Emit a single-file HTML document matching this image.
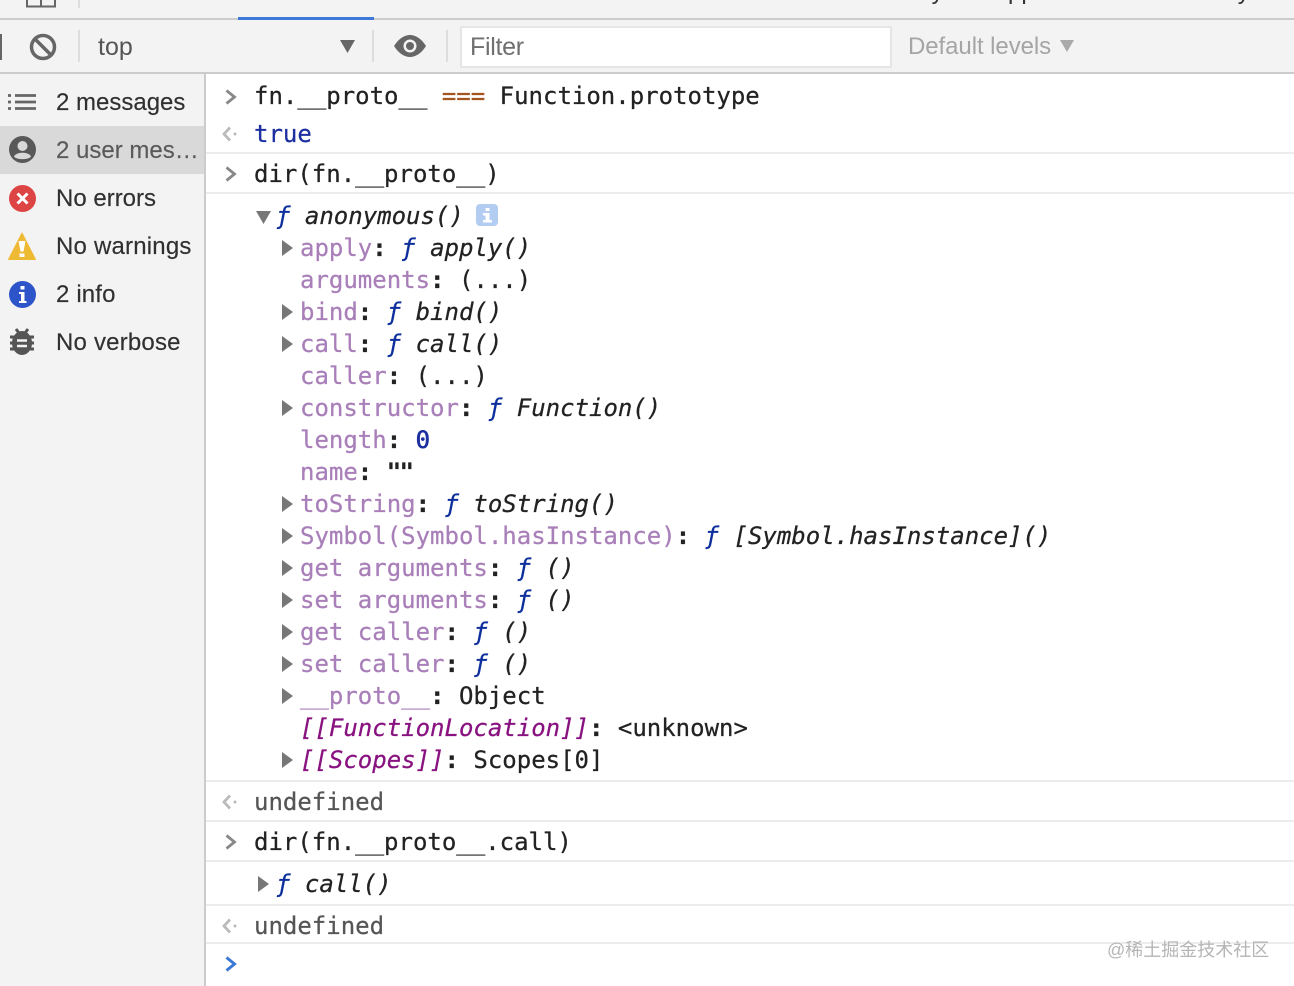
<!DOCTYPE html>
<html><head><meta charset="utf-8"><style>
html,body{margin:0;padding:0;background:#fff}
#p{position:relative;width:1294px;height:986px;overflow:hidden;background:#fff;font-family:"Liberation Sans","Noto Sans CJK SC",sans-serif}
#p div,#p svg{position:absolute}
.r{left:0;height:32px;font:24px/32px "DejaVu Sans Mono","Liberation Mono",monospace;white-space:pre;color:#222;-webkit-text-stroke:.25px currentColor}
.k{color:#a97fb9}.p{color:#881280}.f{color:#0d2f9c;font-style:italic}.i{font-style:italic}.b{color:#1c2fa0}.g{color:#555}
.l{height:2px;left:206px;width:1088px;background:#ececec}
.s{left:56px;font-size:24px;line-height:32px;color:#303030;white-space:nowrap;-webkit-text-stroke:.15px currentColor}
.t{top:-22px;font-size:24px;line-height:28px;color:#333;white-space:nowrap}
</style></head><body><div id="p">
<div style="left:0;top:0;width:1294px;height:72px;background:#f3f3f3"></div>
<div class="t" style="left:131px">Elements</div><div class="t" style="left:262px">Console</div><div class="t" style="left:400px">Sources</div><div class="t" style="left:530px">Network</div><div class="t" style="left:672px">Performance</div><div class="t" style="left:857px">Memory</div><div class="t" style="left:992px">Application</div><div class="t" style="left:1163px">Security</div>
<div style="left:0;top:18px;width:1294px;height:2px;background:#ccc"></div>
<div style="left:238px;top:17px;width:136px;height:3px;background:#3b78d8"></div>
<svg style="left:26px;top:-4px" width="30" height="12"><path d="M1 0V10.500H29V0M15 0V10" fill="none" stroke="#666" stroke-width="2"/></svg>
<div style="left:78px;top:0;width:2px;height:8px;background:#ddd"></div>
<div style="left:0;top:34px;width:2px;height:26px;background:#666"></div>
<svg style="left:29px;top:33px" width="28" height="28" viewBox="0 0 28 28"><circle cx="14" cy="14" r="11.500" fill="none" stroke="#666" stroke-width="3.500"/><path d="M6 6L22 22" stroke="#666" stroke-width="3.500"/></svg>
<div style="left:78px;top:30px;width:2px;height:32px;background:#ddd"></div>
<div style="left:98px;top:31px;font-size:25px;line-height:32px;color:#555">top</div>
<svg style="left:340px;top:40px" width="15" height="13"><path d="M0 0H15L7.500 13Z" fill="#666"/></svg>
<div style="left:372px;top:30px;width:2px;height:32px;background:#ddd"></div>
<svg style="left:394px;top:35px" width="32" height="22" viewBox="0 0 32 22"><path d="M0 11C5 3 11 0 16 0S27 3 32 11C27 19 21 22 16 22S5 19 0 11Z" fill="#666"/><circle cx="16" cy="11" r="6.500" fill="#f3f3f3"/><circle cx="16" cy="11" r="4" fill="#666"/></svg>
<div style="left:446px;top:30px;width:2px;height:32px;background:#ddd"></div>
<div style="left:460px;top:26px;width:428px;height:38px;background:#fff;border:2px solid #e6e6e6"></div>
<div style="left:470px;top:31px;font-size:25px;line-height:32px;color:#6f6f6f;letter-spacing:-.3px">Filter</div>
<div style="left:908px;top:31px;font-size:24px;line-height:32px;color:#a5a5a5;letter-spacing:-.07px">Default levels</div>
<svg style="left:1060px;top:40px" width="14" height="12"><path d="M0 0H14L7 12Z" fill="#aaa"/></svg>
<div style="left:0;top:72px;width:1294px;height:2px;background:#ccc"></div>

<div style="left:0;top:74px;width:204px;height:912px;background:#f3f3f3"></div>
<div style="left:204px;top:74px;width:2px;height:912px;background:#ccc"></div>
<div style="left:0;top:126px;width:204px;height:48px;background:#d9d9d9"></div>
<svg style="left:8px;top:94px" width="28" height="16"><path d="M0 1.500H3M7 1.500H28M0 8H3M7 8H28M0 14.500H3M7 14.500H28" stroke="#666" stroke-width="2.800"/></svg>
<div class="s" style="top:87px">2 messages</div>
<svg style="left:9px;top:136px" width="27" height="27" viewBox="0 0 27 27"><circle cx="13.500" cy="13.500" r="13.500" fill="#585858"/><circle cx="13.500" cy="10" r="5" fill="#d9d9d9"/><path d="M5 20.500C7 15.500 20 15.500 22 20.500C20 24 7 24 5 20.500Z" fill="#d9d9d9"/></svg>
<div class="s" style="top:135px;color:#5a5a5a">2 user mes…</div>
<svg style="left:9px;top:185px" width="27" height="27" viewBox="0 0 27 27"><circle cx="13.500" cy="13.500" r="13.500" fill="#dd4444"/><path d="M8.500 8.500L18.500 18.500M18.500 8.500L8.500 18.500" stroke="#fff" stroke-width="3"/></svg>
<div class="s" style="top:183px">No errors</div>
<svg style="left:8px;top:232px" width="28" height="28" viewBox="0 0 28 28"><path d="M14 1L27.500 27.500H.5Z" fill="#efba33" stroke="#efba33" stroke-linejoin="round"/><path d="M10.500 9H17.500L15.500 19.500H12.500Z" fill="#fff"/><rect x="11.500" y="21.500" width="5" height="3.500" fill="#fff"/></svg>
<div class="s" style="top:231px;letter-spacing:.2px">No warnings</div>
<svg style="left:9px;top:281px" width="27" height="27" viewBox="0 0 27 27"><circle cx="13.500" cy="13.500" r="13.500" fill="#2d55c9"/><rect x="11.500" y="5" width="4" height="3.500" fill="#fff"/><path d="M10 11H15.500V20H17.500V22H10V20H12V13H10Z" fill="#fff"/></svg>
<div class="s" style="top:279px;letter-spacing:.15px">2 info</div>
<svg style="left:9px;top:328px" width="26" height="28" viewBox="0 0 26 28"><ellipse cx="13" cy="15" rx="10" ry="12" fill="#555"/><path d="M1 9H25M1 15H25M1 21H25M7 1L10 5M19 1L16 5" stroke="#555" stroke-width="3"/><path d="M8 12.500H18M8 18H18" stroke="#f3f3f3" stroke-width="2.500"/></svg>
<div class="s" style="top:327px;letter-spacing:.2px">No verbose</div>

<svg style="left:225px;top:89px" width="12" height="16"><path d="M1.500 1.500L9.500 8L1.500 14.500" fill="none" stroke="#888" stroke-width="2.800"/></svg>
<div class="r" style="left:254px;top:80px">fn.__proto__ <span style="color:#a5551f">===</span> Function.prototype</div>
<svg style="left:222px;top:126px" width="16" height="16"><path d="M8 1.500L2 8L8 14.500" fill="none" stroke="#bbb" stroke-width="2.800"/><circle cx="13" cy="8" r="1.500" fill="#bbb"/></svg>
<div class="r b" style="left:254px;top:118px">true</div>
<div class="l" style="top:152px"></div>
<svg style="left:225px;top:166px" width="12" height="16"><path d="M1.500 1.500L9.500 8L1.500 14.500" fill="none" stroke="#888" stroke-width="2.800"/></svg>
<div class="r" style="left:254px;top:158px">dir(fn.__proto__)</div>
<div class="l" style="top:192px"></div>

<svg style="left:256px;top:211px" width="15" height="13"><path d="M0 0H15L7.500 13Z" fill="#777"/></svg>
<div class="r" style="left:276px;top:200px"><span class="f">ƒ</span> <span class="i">anonymous()</span></div>
<svg style="left:476px;top:204px" width="22" height="22"><rect width="22" height="22" rx="4" fill="#b3cdf2"/><rect x="9.500" y="4" width="4" height="3" fill="#fff"/><path d="M7 9H13.500V16H16V18.500H7V16H9.500V11.500H7Z" fill="#fff"/></svg>

<svg style="left:282px;top:240px" width="11" height="16"><path d="M0 0L11 8L0 16Z" fill="#777"/></svg>
<div class="r" style="left:300px;top:232px"><span class="k">apply</span><b>:</b> <span class="f">ƒ</span> <span class="i">apply()</span></div>
<div class="r" style="left:300px;top:264px"><span class="k">arguments</span><b>:</b> (...)</div>
<svg style="left:282px;top:304px" width="11" height="16"><path d="M0 0L11 8L0 16Z" fill="#777"/></svg>
<div class="r" style="left:300px;top:296px"><span class="k">bind</span><b>:</b> <span class="f">ƒ</span> <span class="i">bind()</span></div>
<svg style="left:282px;top:336px" width="11" height="16"><path d="M0 0L11 8L0 16Z" fill="#777"/></svg>
<div class="r" style="left:300px;top:328px"><span class="k">call</span><b>:</b> <span class="f">ƒ</span> <span class="i">call()</span></div>
<div class="r" style="left:300px;top:360px"><span class="k">caller</span><b>:</b> (...)</div>
<svg style="left:282px;top:400px" width="11" height="16"><path d="M0 0L11 8L0 16Z" fill="#777"/></svg>
<div class="r" style="left:300px;top:392px"><span class="k">constructor</span><b>:</b> <span class="f">ƒ</span> <span class="i">Function()</span></div>
<div class="r" style="left:300px;top:424px"><span class="k">length</span><b>:</b> <span class="b" style="-webkit-text-stroke:.6px currentColor">0</span></div>
<div class="r" style="left:300px;top:456px"><span class="k">name</span><b>:</b> <b style="letter-spacing:-1.500px">""</b></div>
<svg style="left:282px;top:496px" width="11" height="16"><path d="M0 0L11 8L0 16Z" fill="#777"/></svg>
<div class="r" style="left:300px;top:488px"><span class="k">toString</span><b>:</b> <span class="f">ƒ</span> <span class="i">toString()</span></div>
<svg style="left:282px;top:528px" width="11" height="16"><path d="M0 0L11 8L0 16Z" fill="#777"/></svg>
<div class="r" style="left:300px;top:520px"><span class="k">Symbol(Symbol.hasInstance)</span><b>:</b> <span class="f">ƒ</span> <span class="i">[Symbol.hasInstance]()</span></div>
<svg style="left:282px;top:560px" width="11" height="16"><path d="M0 0L11 8L0 16Z" fill="#777"/></svg>
<div class="r" style="left:300px;top:552px"><span class="k">get arguments</span><b>:</b> <span class="f">ƒ</span> <span class="i">()</span></div>
<svg style="left:282px;top:592px" width="11" height="16"><path d="M0 0L11 8L0 16Z" fill="#777"/></svg>
<div class="r" style="left:300px;top:584px"><span class="k">set arguments</span><b>:</b> <span class="f">ƒ</span> <span class="i">()</span></div>
<svg style="left:282px;top:624px" width="11" height="16"><path d="M0 0L11 8L0 16Z" fill="#777"/></svg>
<div class="r" style="left:300px;top:616px"><span class="k">get caller</span><b>:</b> <span class="f">ƒ</span> <span class="i">()</span></div>
<svg style="left:282px;top:656px" width="11" height="16"><path d="M0 0L11 8L0 16Z" fill="#777"/></svg>
<div class="r" style="left:300px;top:648px"><span class="k">set caller</span><b>:</b> <span class="f">ƒ</span> <span class="i">()</span></div>
<svg style="left:282px;top:688px" width="11" height="16"><path d="M0 0L11 8L0 16Z" fill="#777"/></svg>
<div class="r" style="left:300px;top:680px"><span class="k">__proto__</span><b>:</b> Object</div>
<div class="r" style="left:300px;top:712px"><span class="p i">[[FunctionLocation]]</span><b>:</b> &lt;unknown&gt;</div>
<svg style="left:282px;top:752px" width="11" height="16"><path d="M0 0L11 8L0 16Z" fill="#777"/></svg>
<div class="r" style="left:300px;top:744px"><span class="p i">[[Scopes]]</span><b>:</b> Scopes[0]</div>
<div class="l" style="top:780px"></div>
<svg style="left:222px;top:794px" width="16" height="16"><path d="M8 1.500L2 8L8 14.500" fill="none" stroke="#bbb" stroke-width="2.800"/><circle cx="13" cy="8" r="1.500" fill="#bbb"/></svg>
<div class="r g" style="left:254px;top:786px">undefined</div>
<div class="l" style="top:820px"></div>
<svg style="left:225px;top:834px" width="12" height="16"><path d="M1.500 1.500L9.500 8L1.500 14.500" fill="none" stroke="#888" stroke-width="2.800"/></svg>
<div class="r" style="left:254px;top:826px">dir(fn.__proto__.call)</div>
<div class="l" style="top:860px"></div>
<svg style="left:258px;top:876px" width="11" height="16"><path d="M0 0L11 8L0 16Z" fill="#777"/></svg>
<div class="r" style="left:276px;top:868px"><span class="f">ƒ</span> <span class="i">call()</span></div>
<div class="l" style="top:904px"></div>
<svg style="left:222px;top:918px" width="16" height="16"><path d="M8 1.500L2 8L8 14.500" fill="none" stroke="#bbb" stroke-width="2.800"/><circle cx="13" cy="8" r="1.500" fill="#bbb"/></svg>
<div class="r g" style="left:254px;top:910px">undefined</div>
<div class="l" style="top:942px"></div>
<svg style="left:225px;top:956px" width="12" height="16"><path d="M1.500 1.500L9.500 8L1.500 14.500" fill="none" stroke="#3b78d8" stroke-width="3"/></svg>
<div style="left:1107px;top:937px;font-size:18px;line-height:26px;color:#b5b5b5;white-space:nowrap;font-family:'Liberation Sans','Noto Sans CJK SC',sans-serif">@稀土掘金技术社区</div>
</div></body></html>
